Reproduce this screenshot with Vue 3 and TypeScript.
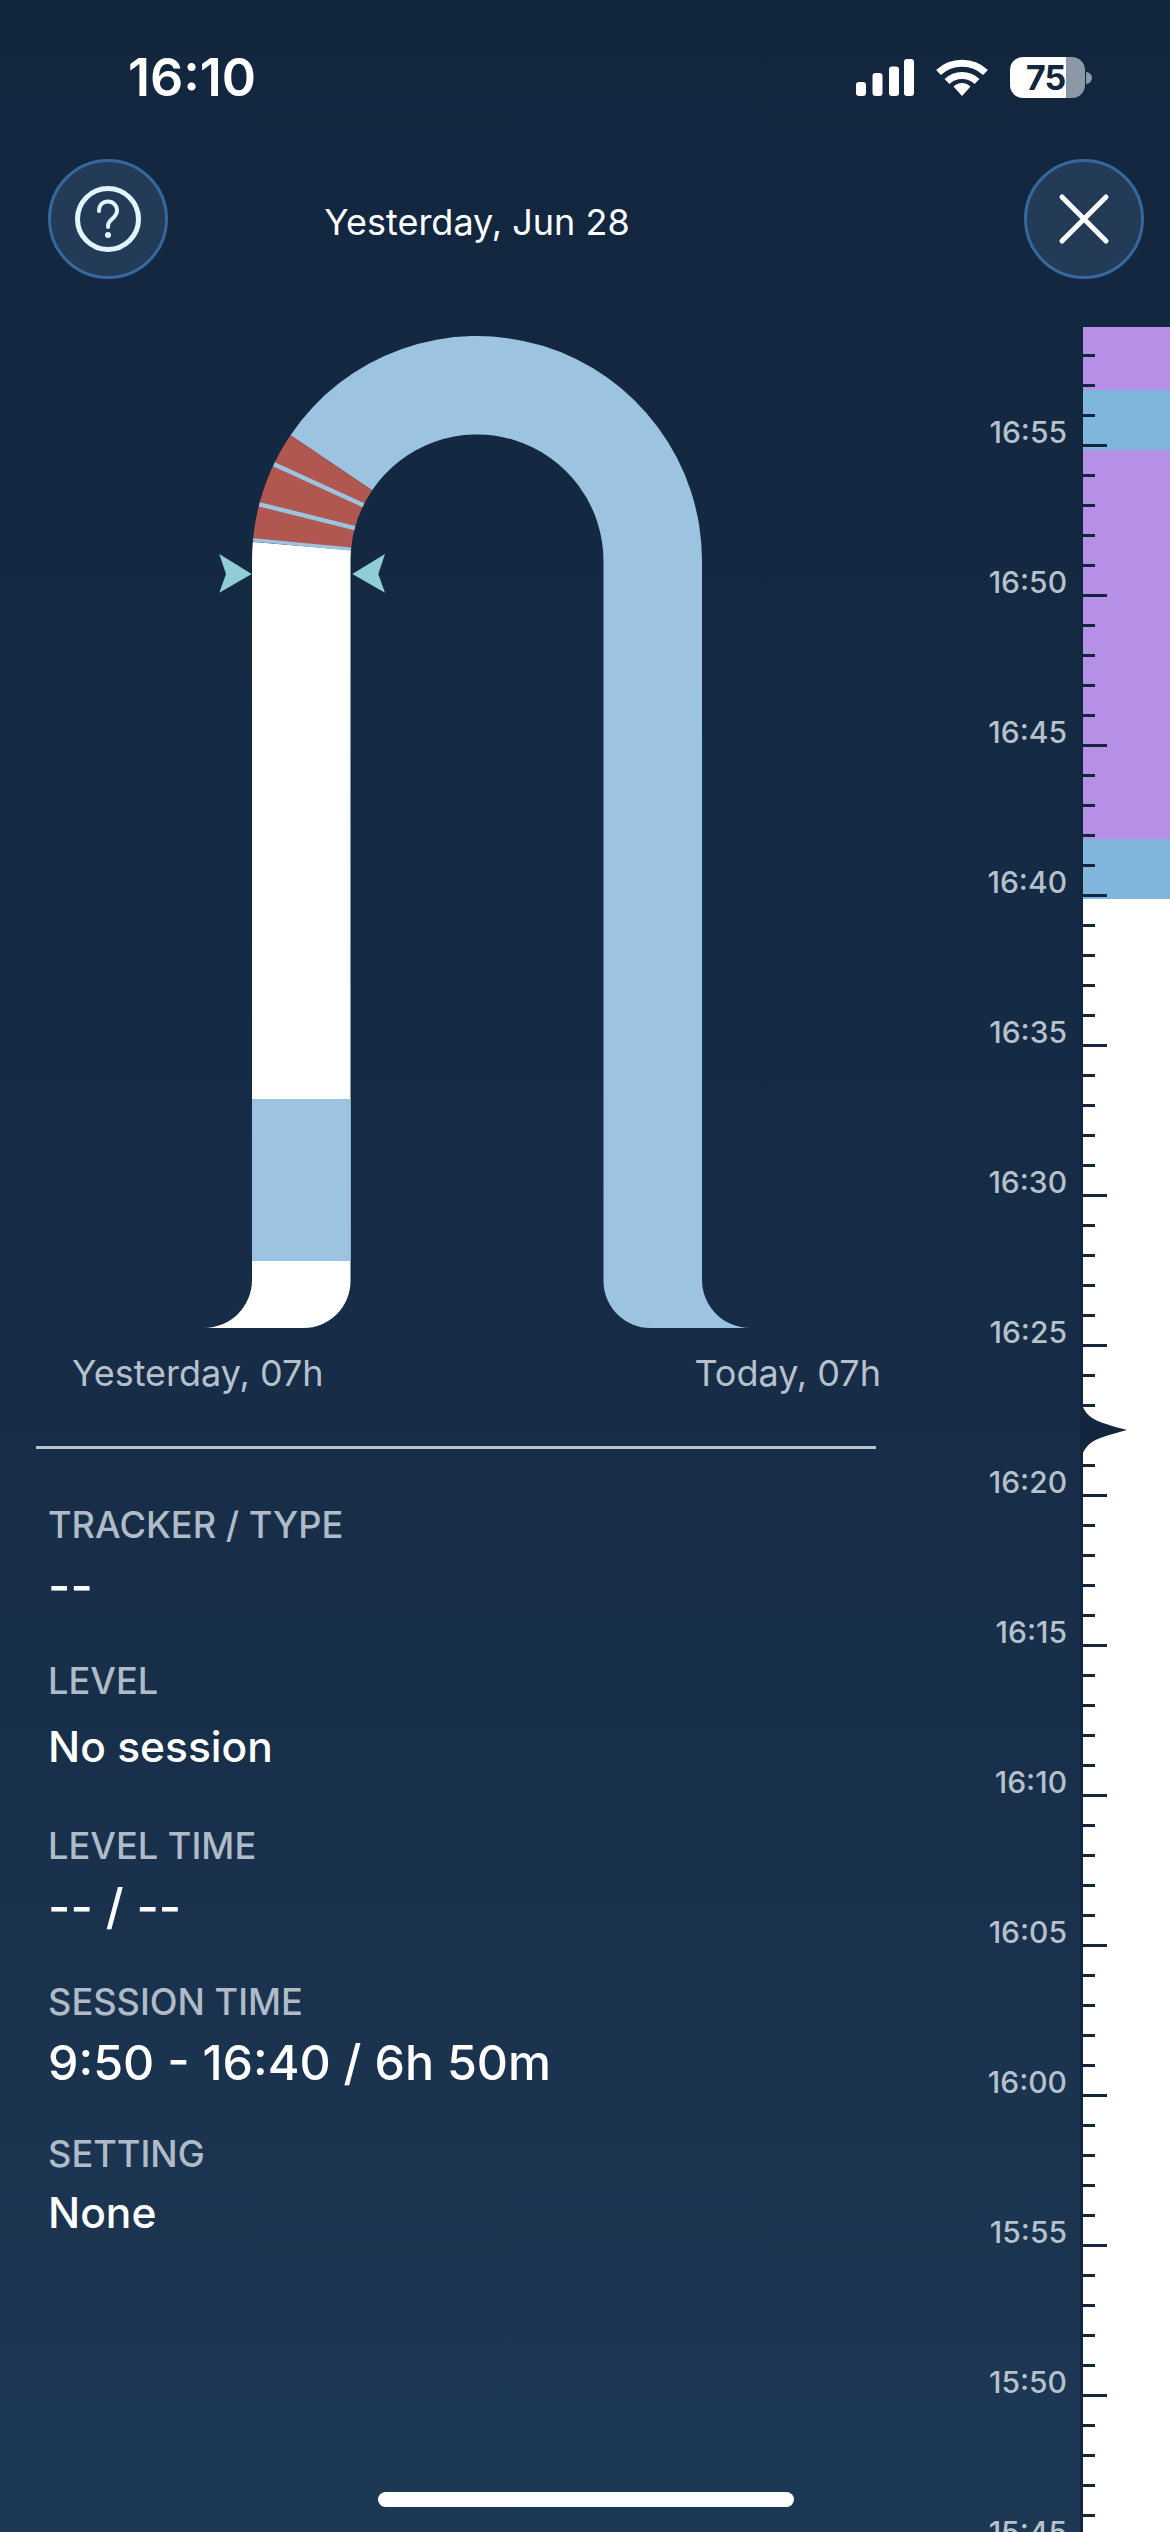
<script setup lang="ts">
const CX = 477
const CY = 561
const R = 225
const r = 126.5

function pt(rad: number, deg: number): string {
  const a = (deg * Math.PI) / 180
  return `${(CX - rad * Math.cos(a)).toFixed(2)} ${(CY - rad * Math.sin(a)).toFixed(2)}`
}
function sector(a1: number, a2: number): string {
  return `M${pt(R, a1)} A${R} ${R} 0 0 1 ${pt(R, a2)} L${pt(r, a2)} A${r} ${r} 0 0 0 ${pt(r, a1)} Z`
}

const bluePath = `M${pt(R, 34)} A${R} ${R} 0 0 1 702 ${CY} L702 1280 A48 48 0 0 0 750 1328 L650.5 1328 A47 47 0 0 1 603.5 1281 L603.5 ${CY} A${r} ${r} 0 0 0 ${pt(r, 34)} Z`
const whitePath = `M${pt(R, 4.9)} A${R} ${R} 0 0 0 252 ${CY} L252 1280 A48 48 0 0 1 204 1328 L303.5 1328 A47 47 0 0 0 350.5 1281 L350.5 ${CY} A${r} ${r} 0 0 1 ${pt(r, 4.9)} Z`
const redPath = sector(5.5, 34)
const stripes = [
  { d: `M${pt(R, 5.4)} L${pt(r, 5.4)}`, w: 3.4 },
  { d: `M${pt(R, 14.6)} L${pt(r, 15.1)}`, w: 4.4 },
  { d: `M${pt(R, 25.5)} L${pt(r, 26.2)}`, w: 4.4 },
]

const fields = [
  { label: 'TRACKER / TYPE', value: '--', kind: 'numeric' },
  { label: 'LEVEL', value: 'No session', kind: 'word' },
  { label: 'LEVEL TIME', value: '-- / --', kind: 'numeric' },
  { label: 'SESSION TIME', value: '9:50 - 16:40 / 6h 50m', kind: 'numeric' },
  { label: 'SETTING', value: 'None', kind: 'word' },
]

const times = ['16:55', '16:50', '16:45', '16:40', '16:35', '16:30', '16:25', '16:20', '16:15', '16:10', '16:05', '16:00', '15:55', '15:50', '15:45']
const ticks = Array.from({ length: 74 }, (_, i) => ({ id: i, long: i % 5 === 3 }))
</script>

<template>
  <div class="screen">
    <div class="status">
      <span class="clock">16:10</span>
      <div class="status-icons">
        <svg class="signal" width="58" height="37" viewBox="0 0 58 37" fill="#fff">
          <rect x="0" y="23" width="10" height="14" rx="3" />
          <rect x="16.5" y="14" width="10" height="23" rx="3" />
          <rect x="33" y="7.5" width="10" height="29.5" rx="3" />
          <rect x="48" y="0" width="10" height="37" rx="3" />
        </svg>
        <svg class="wifi" width="52" height="38" viewBox="0 0 52 38" fill="none" stroke="#fff" stroke-width="7">
          <path d="M2.5 14.5 A34.5 34.5 0 0 1 49.5 14.5" />
          <path d="M11 23.5 A21.5 21.5 0 0 1 41 23.5" />
          <path d="M17.5 28.5 L26 38 L34.5 28.5 A12 12 0 0 0 17.5 28.5 Z" fill="#fff" stroke="none" />
        </svg>
        <div class="battery">
          <div class="battery-body">
            <div class="battery-fill"></div>
            <div class="battery-empty"></div>
            <span class="battery-text">75</span>
          </div>
          <div class="battery-nub"></div>
        </div>
      </div>
    </div>

    <div class="header">
      <button class="round-btn" type="button" aria-label="Help">
        <svg width="72" height="72" viewBox="0 0 72 72" fill="none">
          <circle cx="36" cy="36" r="30.5" stroke="#e0f5ff" stroke-width="5" />
          <path d="M27 28 C27 22 31 18.5 36 18.5 C41 18.5 45 22.5 45 27.5 C45 33 40.5 35 38 38 C36.5 39.5 36 41 36 44" stroke="#e0f5ff" stroke-width="4" stroke-linecap="round" />
          <circle cx="36" cy="52" r="3" fill="#e0f5ff" />
        </svg>
      </button>
      <div class="title">Yesterday, Jun 28</div>
      <button class="round-btn" type="button" aria-label="Close">
        <svg width="52" height="52" viewBox="0 0 52 52" fill="none" stroke="#fff" stroke-width="5" stroke-linecap="round">
          <path d="M4 4 L48 48 M48 4 L4 48" />
        </svg>
      </button>
    </div>

    <div class="main">
      <div class="left">
        <svg class="chart" width="954" height="1003" viewBox="0 327 954 1003">
          <path :d="bluePath" fill="#9cc3e0" />
          <path :d="whitePath" fill="#ffffff" />
          <rect x="252" y="1099" width="98.5" height="162" fill="#9cc3e0" />
          <path :d="redPath" fill="#b05750" />
          <path v-for="(s, i) in stripes" :key="i" :d="s.d" :stroke-width="s.w" stroke="#9cc3e0" fill="none" />
          <path d="M219.3 554 L251.7 574 L219.3 592.7 L226 574 Z" fill="#91cdd4" />
          <path d="M385 554 L352.3 574 L385 592.7 L378.3 574 Z" fill="#91cdd4" />
        </svg>
        <div class="axis">
          <span>Yesterday, 07h</span>
          <span>Today, 07h</span>
        </div>
        <div class="divider"></div>
        <div class="fields">
          <div v-for="f in fields" :key="f.label" class="field">
            <div class="field-label">{{ f.label }}</div>
            <div class="field-value" :class="f.kind">{{ f.value }}</div>
          </div>
        </div>
      </div>

      <div class="timeline">
        <div class="labels">
          <div v-for="t in times" :key="t" class="time">{{ t }}</div>
        </div>
        <div class="rail">
          <div class="seg purple seg-a"></div>
          <div class="seg blue seg-b"></div>
          <div class="seg purple seg-c"></div>
          <div class="seg blue seg-d"></div>
          <div class="ticks">
            <div v-for="t in ticks" :key="t.id" class="tick-row">
              <div class="tick" :class="{ long: t.long }"></div>
            </div>
          </div>
          <svg class="pointer" width="47" height="46" viewBox="0 0 47 46" fill="#12263e">
            <path d="M0 0 L3 0 C7 9 14 13 23 16 C31 19 40 21 47 23 C40 25 31 27 23 30 C14 33 7 37 3 46 L0 46 Z" />
          </svg>
        </div>
      </div>
    </div>

    <div class="home"></div>
  </div>
</template>

<style>
html, body { margin: 0; padding: 0; background: #12263e; }
</style>

<style scoped>
.screen {
  position: relative;
  width: 1170px;
  height: 2532px;
  overflow: hidden;
  display: flex;
  flex-direction: column;
  background: linear-gradient(180deg, #12263e 0%, #172d48 60%, #1d3855 100%);
  font-family: Inter, "Liberation Sans", sans-serif;
  color: #fff;
}
.status {
  height: 159px;
  flex: none;
  box-sizing: border-box;
  padding: 55px 78px 0 128px;
  display: flex;
  justify-content: space-between;
  align-items: flex-start;
}
.clock {
  font-size: 52px;
  line-height: 46px;
  font-weight: 600;
}
.status-icons {
  display: flex;
  align-items: flex-start;
  padding-top: 2px;
}
.signal { margin-top: 2px; margin-right: 22px; }
.wifi { margin-top: 1px; margin-right: 22px; }
.battery { display: flex; align-items: center; }
.battery-body {
  position: relative;
  width: 75px;
  height: 41px;
  border-radius: 13px;
  overflow: hidden;
  display: flex;
}
.battery-fill { width: 56px; background: #fff; }
.battery-empty { flex: 1; background: #8c98a5; }
.battery-text {
  position: absolute;
  left: 16px;
  top: 0;
  line-height: 41px;
  font-size: 34px;
  font-weight: 700;
  color: #12263e;
  letter-spacing: -1px;
}
.battery-nub {
  width: 6px;
  height: 12px;
  margin-left: 1px;
  border-radius: 0 6px 6px 0;
  background: #8c98a5;
}
.header {
  flex: none;
  height: 120px;
  display: flex;
  align-items: center;
  padding-left: 48px;
}
.round-btn {
  flex: none;
  width: 120px;
  height: 120px;
  box-sizing: border-box;
  padding: 0;
  border-radius: 50%;
  border: 3px solid #36689f;
  background: #243b57;
  display: flex;
  align-items: center;
  justify-content: center;
}
.title {
  width: 618px;
  margin-right: 238px;
  text-align: center;
  font-size: 36px;
  line-height: 44px;
  padding-top: 6px;
}
.main {
  flex: 1;
  margin-top: 48px;
  display: flex;
  min-height: 0;
}
.left {
  width: 954px;
  flex: none;
}
.chart { display: block; }
.axis {
  width: 809px;
  margin: 21px 0 0 72px;
  display: flex;
  justify-content: space-between;
  font-size: 36px;
  line-height: 44px;
  color: #b7c1cc;
}
.divider {
  width: 840px;
  height: 3px;
  margin: 51px 0 0 36px;
  background: #b5c3cf;
}
.fields {
  padding: 54px 0 0 48px;
}
.field-label {
  font-size: 36.2px;
  line-height: 44px;
  font-weight: 500;
  color: #b0bbc8;
}
.field-value {
  line-height: 56px;
  margin-top: 11px;
}
.field-value.numeric { font-size: 48.4px; font-weight: 500; }
.field-value.word { font-size: 42.5px; font-weight: 500; }
.field + .field { margin-top: 45px; }
.field:nth-child(2) .field-value { margin-top: 16px; }
.field:nth-child(3) { margin-top: 49px; }
.field:nth-child(4) { margin-top: 45px; }
.field:nth-child(5) { margin-top: 41px; }
.field:nth-child(5) .field-value { margin-top: 9px; }
.timeline {
  width: 216px;
  flex: none;
  display: flex;
  min-height: 0;
}
.labels {
  width: 126px;
  flex: none;
  box-sizing: border-box;
  padding: 90px 13px 0 0;
}
.time {
  height: 150px;
  line-height: 30px;
  font-size: 30px;
  font-weight: 500;
  color: #b7c1cc;
  text-align: right;
}
.rail {
  position: relative;
  flex: 1;
  border-left: 3px solid #12263e;
  background: #fff;
  display: flex;
  flex-direction: column;
}
.seg { flex: none; }
.purple { background: #b690e6; }
.blue { background: #80b5dc; }
.seg-a { height: 63px; }
.seg-b { height: 60px; }
.seg-c { height: 389px; }
.seg-d { height: 60px; }
.ticks {
  position: absolute;
  left: 0;
  top: 27px;
  right: 0;
}
.tick-row {
  height: 30px;
}
.tick { width: 12px; height: 3px; background: #12263e; }
.tick.long { width: 24px; }
.pointer {
  position: absolute;
  left: -3px;
  top: 1080px;
}
.home {
  position: absolute;
  left: 378px;
  bottom: 25px;
  width: 416px;
  height: 15px;
  border-radius: 8px;
  background: #fff;
}
</style>
